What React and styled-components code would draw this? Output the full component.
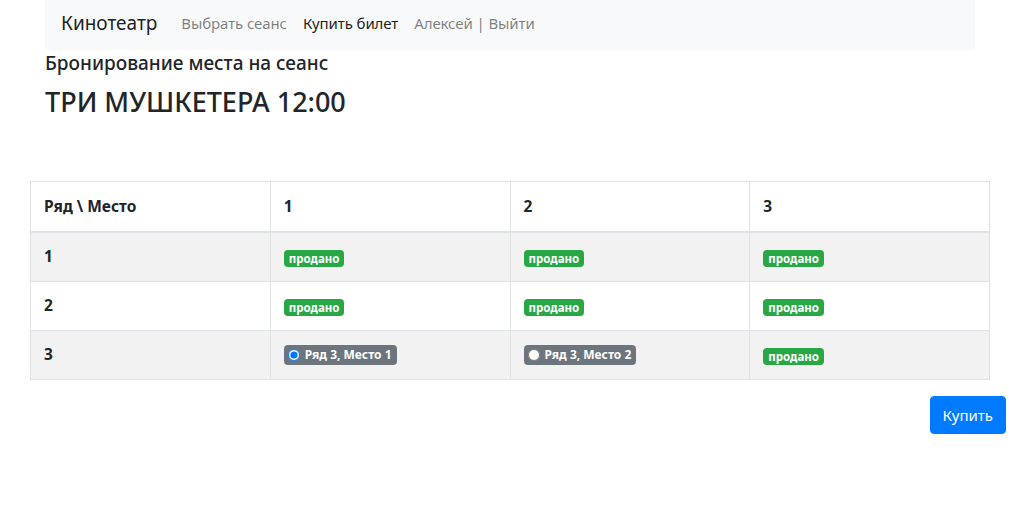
import React from "react";
import styled, { createGlobalStyle } from "styled-components";

const Global = createGlobalStyle`
  body {
    margin: 0;
    font-family: "Noto Sans", "Open Sans", Arial, sans-serif;
    font-size: 16px;
    line-height: 1.5;
    color: #212529;
    background: #fff;
  }
  * { box-sizing: border-box; }
`;

const Container = styled.div`
  max-width: 960px;
  margin: 0 auto;
  padding: 0 15px;
`;

const Navbar = styled.nav`
  display: flex;
  align-items: center;
  height: 50px;
  padding: 0 16px 4px;
  background: #f8f9fa;
`;

const Brand = styled.a`
  font-size: 19px;
  color: rgba(0, 0, 0, 0.9);
  margin-right: 16px;
  text-decoration: none;
`;

const NavLink = styled.a`
  font-size: 15px;
  letter-spacing: -0.1px;
  padding: 8px 8px;
  color: ${(p) => (p.$active ? "rgba(0,0,0,0.9)" : "rgba(0,0,0,0.5)")};
  text-decoration: none;
`;

const Subtitle = styled.h5`
  margin: 2px 0 0;
  font-size: 19px;
  font-weight: 500;
  line-height: 1.2;
`;

const Title = styled.h2`
  margin: 11px 0 0;
  font-size: 27px;
  font-weight: 500;
  line-height: 1.2;
`;

const TableWrap = styled.div`
  max-width: 960px;
  margin: 63px auto 0;
`;

const Table = styled.table`
  width: 100%;
  border-collapse: collapse;
  table-layout: fixed;
`;

const Th = styled.th`
  text-align: left;
  font-weight: 700;
  font-size: 15.5px;
  padding: 12px 13px;
  height: ${(p) => (p.$head ? "50px" : "49px")};
  border: 1px solid #dee2e6;
  border-bottom-width: ${(p) => (p.$head ? "2px" : "1px")};
  vertical-align: middle;
`;

const Td = styled.td`
  padding: 12px 13px;
  height: 49px;
  border: 1px solid #dee2e6;
  vertical-align: middle;
`;

const Row = styled.tr`
  background: ${(p) => (p.$striped ? "#f2f2f2" : "#fff")};
`;

const Badge = styled.span`
  display: inline-flex;
  align-items: center;
  gap: 5px;
  padding: ${(p) => (p.$seat ? "2px 5px 3px 4px" : "1px 5px")};
  font-size: ${(p) => (p.$seat ? "12px" : "11.5px")};
  font-weight: 700;
  line-height: 15px;
  color: #fff;
  border-radius: 4px;
  background: ${(p) => (p.$seat ? "#6c757d" : "#28a745")};
`;

const Radio = styled.input`
  margin: 0;
  width: 12px;
  height: 12px;
`;

const Actions = styled.div`
  display: flex;
  justify-content: flex-end;
  padding: 16px 14px 0;
`;

const Button = styled.button`
  font-family: inherit;
  font-size: 15px;
  line-height: 22px;
  padding: 7px 12px;
  color: #fff;
  background: #007bff;
  border: 1px solid #007bff;
  border-radius: 4px;
`;

const rows = [
  ["sold", "sold", "sold"],
  ["sold", "sold", "sold"],
  [{ label: "Ряд 3, Место 1", checked: true }, { label: "Ряд 3, Место 2", checked: false }, "sold"],
];

export default function App() {
  return (
    <>
      <Global />
      <Container>
        <Navbar>
          <Brand href="#">Кинотеатр</Brand>
          <NavLink href="#">Выбрать сеанс</NavLink>
          <NavLink href="#" $active>Купить билет</NavLink>
          <NavLink href="#">Алексей | Выйти</NavLink>
        </Navbar>
        <Subtitle>Бронирование места на сеанс</Subtitle>
        <Title>ТРИ МУШКЕТЕРА 12:00</Title>
      </Container>
      <TableWrap>
        <Table>
          <thead>
            <tr>
              <Th $head>Ряд \ Место</Th>
              <Th $head>1</Th>
              <Th $head>2</Th>
              <Th $head>3</Th>
            </tr>
          </thead>
          <tbody>
            {rows.map((r, i) => (
              <Row key={i} $striped={i % 2 === 0}>
                <Th>{i + 1}</Th>
                {r.map((c, j) => (
                  <Td key={j}>
                    {c === "sold" ? (
                      <Badge>продано</Badge>
                    ) : (
                      <Badge $seat>
                        <Radio type="radio" name="seat" defaultChecked={c.checked} />
                        {c.label}
                      </Badge>
                    )}
                  </Td>
                ))}
              </Row>
            ))}
          </tbody>
        </Table>
      </TableWrap>
      <Actions>
        <Button>Купить</Button>
      </Actions>
    </>
  );
}
